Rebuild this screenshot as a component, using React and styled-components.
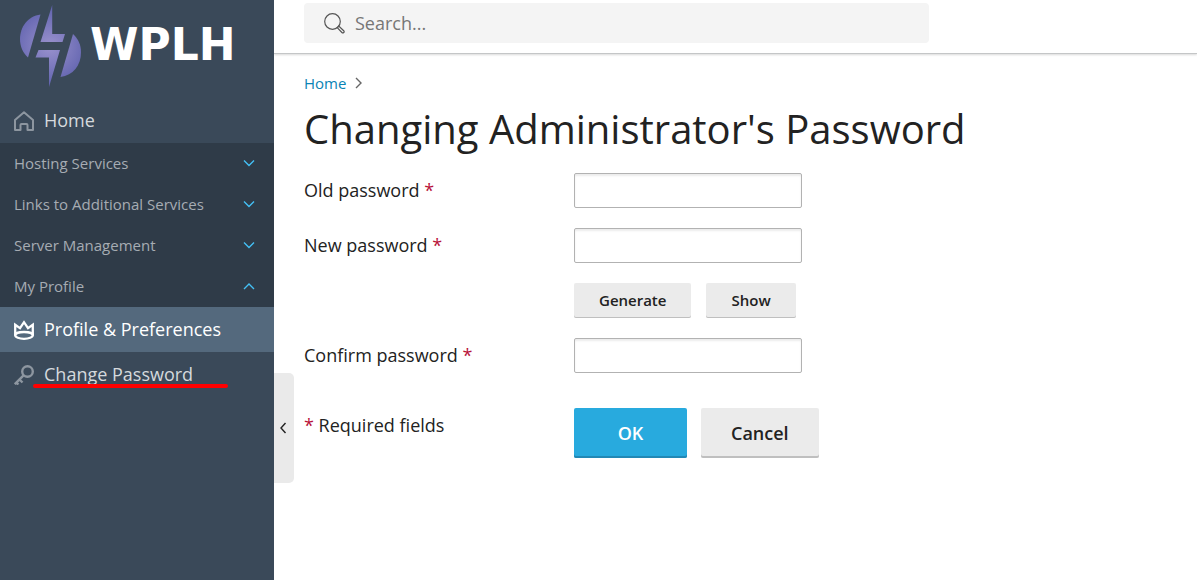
import React from "react";
import styled, { createGlobalStyle } from "styled-components";

const GlobalStyle = createGlobalStyle`
  *, *::before, *::after { box-sizing: border-box; }
  body {
    margin: 0;
    background: #fff;
    color: #222;
    font-family: "Open Sans", "Noto Sans", sans-serif;
    font-size: 18px;
    line-height: 25px;
  }
  button, input { font: inherit; color: inherit; }
`;

const Page = styled.div`
  display: flex;
  min-height: 100vh;
`;

const Sidebar = styled.aside`
  position: relative;
  flex: 0 0 274px;
  background: #3a4959;
`;

const Brand = styled.a`
  display: flex;
  align-items: center;
  gap: 8px;
  height: 98px;
  padding: 0 18px 8px;
  color: #fff;
  text-decoration: none;
`;

const BrandName = styled.span`
  font-family: "DejaVu Sans", sans-serif;
  font-size: 44px;
  font-weight: 700;
  line-height: 48px;
`;

const NavItem = styled.a`
  position: relative;
  display: flex;
  align-items: center;
  gap: 10px;
  height: 45px;
  padding: 0 14px;
  background: ${(p) => (p.$active ? "#54697d" : "transparent")};
  color: ${(p) => (p.$active ? "#fff" : "#d5d9dd")};
  text-decoration: none;
  svg { color: ${(p) => (p.$active ? "#fff" : "#8d96a0")}; }
`;

const Underline = styled.span`
  position: absolute;
  left: 33px;
  right: 46px;
  bottom: 9px;
  height: 4px;
  border-radius: 2px;
  background: #f00;
`;

const NavGroup = styled.button`
  display: flex;
  align-items: center;
  justify-content: space-between;
  width: 100%;
  height: 41px;
  padding: 0 19px 0 14px;
  border: 0;
  background: #2f3b48;
  color: #a6acb3;
  font-size: 15px;
  text-align: left;
  svg { color: #44c0f5; }
`;

const CollapseButton = styled.button`
  position: absolute;
  top: 373px;
  left: 100%;
  display: flex;
  align-items: center;
  justify-content: center;
  width: 20px;
  height: 110px;
  padding: 0 2px 0 0;
  border: 0;
  border-radius: 0 5px 5px 0;
  background: #eaeaea;
`;

const Main = styled.div`
  flex: 1;
  min-width: 0;
`;

const Header = styled.header`
  height: 54px;
  padding: 3px 30px 0;
  border-bottom: 1px solid #c4c6c7;
  box-shadow: 0 1px 2px rgba(0, 0, 0, 0.15);
`;

const SearchBox = styled.label`
  display: flex;
  align-items: center;
  gap: 10px;
  max-width: 625px;
  height: 40px;
  padding: 0 20px;
  border-radius: 4px;
  background: #f4f4f4;
  color: #555;
`;

const SearchInput = styled.input`
  flex: 1;
  min-width: 0;
  padding: 0;
  border: 0;
  outline: 0;
  background: transparent;
  &::placeholder { color: #777; opacity: 1; }
`;

const Content = styled.main`
  padding: 18px 30px;
`;

const Breadcrumbs = styled.nav`
  display: flex;
  align-items: center;
  gap: 8px;
  height: 22px;
  font-size: 15px;
  color: #666;
  a { color: #0a83b5; text-decoration: none; }
`;

const Title = styled.h1`
  margin: 7px 0 16px;
  font-size: 40px;
  font-weight: 400;
  line-height: 56px;
`;

const Form = styled.form`
  display: grid;
  gap: 20px;
`;

const Row = styled.div`
  display: grid;
  grid-template-columns: 270px 1fr;
  align-items: center;
  min-height: 35px;
`;

const FooterRow = styled(Row)`
  align-items: start;
  margin-top: 15px;
`;

const RequiredNote = styled.p`
  margin: 0;
  padding-top: 5px;
`;

const Star = styled.span`
  color: #b8123a;
`;

const PasswordInput = styled.input`
  width: 228px;
  height: 35px;
  padding: 0 8px;
  border: 1px solid #b2b2b2;
  border-radius: 2px;
  background: #fff;
  box-shadow: inset 0 2px 2px #ececec;
`;

const Buttons = styled.div`
  grid-column: 2;
  display: flex;
  gap: ${(p) => p.$gap}px;
`;

const SmallButton = styled.button`
  height: 35px;
  padding: 0 25px;
  border: 0;
  border-radius: 2px;
  background: #ebebeb;
  box-shadow: inset 0 -1px #bfbfbf;
  font-size: 15px;
  font-weight: 600;
`;

const LargeButton = styled.button`
  min-width: 113px;
  height: 50px;
  padding: 0 30px;
  border: 0;
  border-radius: 2px;
  background: ${(p) => (p.$primary ? "#28aade" : "#ebebeb")};
  box-shadow: inset 0 -2px ${(p) => (p.$primary ? "#2288b5" : "#bfbfbf")};
  color: ${(p) => (p.$primary ? "#fff" : "#222")};
  font-weight: 600;
`;

const Chevron = ({ d, width = 12, height = 12, stroke = 1.4 }) => (
  <svg width={width} height={height} viewBox={`0 0 ${width} ${height}`} fill="none" stroke="currentColor" strokeWidth={stroke} aria-hidden="true">
    <path d={d} />
  </svg>
);

const Logo = () => (
  <svg width="64" height="84" viewBox="0 0 64 84" aria-hidden="true">
    <defs>
      <radialGradient id="brand" gradientUnits="userSpaceOnUse" cx="32" cy="43" r="38">
        <stop offset="0" stopColor="#9a92cd" />
        <stop offset="1" stopColor="#6365b0" />
      </radialGradient>
    </defs>
    <g fill="url(#brand)">
      <path d="M22.500 11.500C10 13 2 24 2 36c0 7.500 3 14 8 18.500Z" />
      <path d="M34.200 2v29H47l-2.500 8H22.500Z" />
      <path d="M20.500 47H42L31 84V54.500H17.500Z" />
      <path d="M55 31c5 4.500 8 10.500 8 18.500 0 13-8 23-20.500 24.500Z" />
    </g>
  </svg>
);

const HomeIcon = () => (
  <svg width="20" height="20" viewBox="0 0 20 20" fill="none" stroke="currentColor" strokeWidth="2" strokeLinejoin="round" aria-hidden="true">
    <path d="M1 9 10 1.200 19 9v10h-5.500v-5a1 1 0 0 0-1-1h-5a1 1 0 0 0-1 1v5H1Z" />
  </svg>
);

const CrownIcon = () => (
  <svg width="20" height="20" viewBox="0 0 20 20" fill="none" stroke="currentColor" strokeWidth="2.300" aria-hidden="true">
    <path d="M1.200 15.500V4.800l4.800 3.400 4-6 4 6 4.800-3.400v10.700" />
    <path d="M1.200 15.300c0-2 4-3.300 8.800-3.300s8.800 1.300 8.800 3.300-4 3.500-8.800 3.500-8.800-1.500-8.800-3.500Z" />
  </svg>
);

const KeyIcon = () => (
  <svg width="20" height="20" viewBox="0 0 20 20" fill="none" stroke="currentColor" strokeWidth="2.400" aria-hidden="true">
    <circle cx="13.500" cy="6.500" r="5.300" />
    <path d="M9.800 10.200.8 19.200M5.500 14.500l3 3M2.200 17.300l2.200 2.200" />
  </svg>
);

const SearchIcon = () => (
  <svg width="21" height="21" viewBox="0 0 21 21" fill="none" stroke="currentColor" strokeWidth="1.200" aria-hidden="true">
    <circle cx="8.500" cy="8.500" r="7.800" />
    <path d="m13.200 14.600 1.600-1.600 4.900 4.700c1.200 1.300-.6 3-1.800 1.800Z" />
  </svg>
);

const GROUPS = [
  { label: "Hosting Services", open: false },
  { label: "Links to Additional Services", open: false },
  { label: "Server Management", open: false },
  { label: "My Profile", open: true },
];

const Field = ({ id, label }) => (
  <Row>
    <label htmlFor={id}>
      {label} <Star>*</Star>
    </label>
    <PasswordInput id={id} type="password" required />
  </Row>
);

export default function App() {
  return (
    <>
      <GlobalStyle />
      <Page>
        <Sidebar>
          <Brand href="#">
            <Logo />
            <BrandName>WPLH</BrandName>
          </Brand>
          <nav>
            <NavItem href="#">
              <HomeIcon />
              Home
            </NavItem>
            {GROUPS.map((g) => (
              <NavGroup key={g.label} type="button" aria-expanded={g.open}>
                {g.label}
                <Chevron d={g.open ? "M1 8 6 3l5 5" : "M1 2.500 6 7.500l5-5"} />
              </NavGroup>
            ))}
            <NavItem href="#" $active>
              <CrownIcon />
              Profile &amp; Preferences
            </NavItem>
            <NavItem href="#">
              <KeyIcon />
              Change Password
              <Underline />
            </NavItem>
          </nav>
          <CollapseButton type="button" aria-label="Collapse sidebar">
            <Chevron d="M6.500 1 2 6l4.500 5" width={8} />
          </CollapseButton>
        </Sidebar>
        <Main>
          <Header>
            <SearchBox>
              <SearchIcon />
              <SearchInput type="search" placeholder="Search..." aria-label="Search" />
            </SearchBox>
          </Header>
          <Content>
            <Breadcrumbs aria-label="Breadcrumb">
              <a href="#">Home</a>
              <Chevron d="m2 1 5 5-5 5" />
            </Breadcrumbs>
            <Title>Changing Administrator's Password</Title>
            <Form onSubmit={(e) => e.preventDefault()}>
              <Field id="old-password" label="Old password" />
              <Field id="new-password" label="New password" />
              <Row>
                <Buttons $gap={15}>
                  <SmallButton type="button">Generate</SmallButton>
                  <SmallButton type="button">Show</SmallButton>
                </Buttons>
              </Row>
              <Field id="confirm-password" label="Confirm password" />
              <FooterRow>
                <RequiredNote>
                  <Star>*</Star> Required fields
                </RequiredNote>
                <Buttons $gap={14}>
                  <LargeButton type="submit" $primary>OK</LargeButton>
                  <LargeButton type="button">Cancel</LargeButton>
                </Buttons>
              </FooterRow>
            </Form>
          </Content>
        </Main>
      </Page>
    </>
  );
}
